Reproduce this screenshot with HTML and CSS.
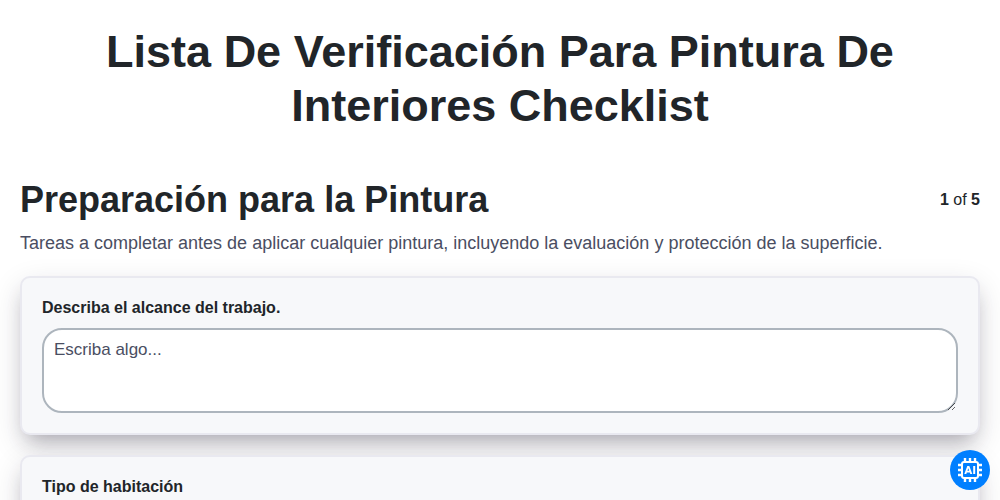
FILE: index.html
```
<!DOCTYPE html>
<html lang="es">
<head>
<meta charset="utf-8">
<meta name="viewport" content="width=device-width, initial-scale=1">
<title>Lista De Verificación Para Pintura De Interiores Checklist</title>
<link rel="stylesheet" href="styles.css">
</head>
<body>
<main class="page">
  <h1 class="title">Lista De Verificación Para Pintura De Interiores Checklist</h1>
  <header class="section-head">
    <h2 class="section-title">Preparación para la Pintura</h2>
    <p class="progress"><b>1</b> of <b>5</b></p>
  </header>
  <p class="lead">Tareas a completar antes de aplicar cualquier pintura, incluyendo la evaluación y protección de la superficie.</p>
  <form class="fields">
    <div class="card">
      <label class="label" for="scope">Describa el alcance del trabajo.</label>
      <textarea class="textarea" id="scope" placeholder="Escriba algo..."></textarea>
    </div>
    <div class="card">
      <label class="label" for="room">Tipo de habitación</label>
      <select class="select" id="room"><option></option></select>
    </div>
  </form>
</main>
<button class="assistant" type="button" aria-label="AI">
  <svg class="assistant-icon" viewBox="0 0 24 24" fill="none" stroke="currentColor" stroke-width="2" aria-hidden="true">
    <rect x="4" y="4" width="16" height="16" rx="2"/>
    <path stroke-width="2.4" d="M7 0v4M12 0v4M17 0v4M7 20v4M12 20v4M17 20v4M0 7h4M0 12h4M0 17h4M20 7h4M20 12h4M20 17h4"/>
    <path fill="currentColor" fill-rule="evenodd" stroke="none" d="M6.3 16L9.3 8H11.3L14.3 16H12.3L11.8 14.4H8.8L8.3 16ZM9.4 12.8H11.2L10.3 10.2ZM15.2 8h2v8h-2Z"/>
  </svg>
</button>
</body>
</html>
```
FILE: styles.css
```
*, *::before, *::after { box-sizing: border-box; }
html { scrollbar-width: none; }
body {
  margin: 0;
  font: 16px/24px "Liberation Sans", Arial, sans-serif;
  color: #212529;
  background: #fff;
}
.page { padding: 25px 20px; }
.title { margin: 0 0 40px; font-size: 45px; line-height: 54px; text-align: center; }
.section-head { display: flex; align-items: center; justify-content: space-between; gap: 16px; }
.section-title { margin: 0; font-size: 36px; line-height: 54px; }
.progress { margin: 0; }
.lead { margin: 3px 0 19px; font-size: 18px; line-height: 27px; color: #4a4e62; }
.fields { display: grid; gap: 20px; }
.card {
  display: grid;
  gap: 8px;
  padding: 18px 20px 20px;
  border: 2px solid #e9e9f0;
  border-radius: 10px;
  background: #f7f8fa;
  box-shadow: 0 10px 30px rgba(34, 30, 50, 0.14), 0 12px 20px -8px rgba(34, 30, 50, 0.32);
}
.label { font-weight: bold; }
.textarea, .select {
  display: block;
  width: 100%;
  padding: 7px 10px;
  border: 2px solid #adb5bd;
  border-radius: 20px;
  background: #fff;
  color: #212529;
  font: 17px/26px "Liberation Sans", Arial, sans-serif;
}
.textarea { height: 85px; resize: vertical; }
.textarea::placeholder { color: #4a4e62; }
.assistant {
  position: fixed;
  right: 10px;
  bottom: 10px;
  display: grid;
  place-items: center;
  width: 40px;
  height: 40px;
  padding: 0;
  border: 0;
  border-radius: 50%;
  background: #007fff;
  color: #fff;
}
.assistant-icon { width: 24px; height: 24px; }
```
